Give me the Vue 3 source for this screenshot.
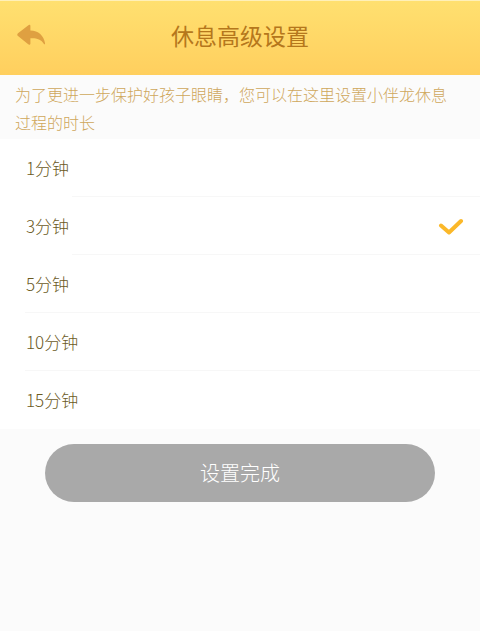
<template>
  <div class="rest-settings">
    <header class="rest-settings__header">
      <button class="rest-settings__back" type="button" aria-label="返回">
        <svg width="30" height="24" viewBox="0 0 30 24" aria-hidden="true">
          <path
            d="M12.4 2.2 C13.2 1.3 14.4 1.5 14.4 2.9 V7.4 C22.5 7.6 27.8 12.6 29 20 C29.2 21.6 28.3 21.6 27.6 20.4 C25 16.2 20.4 14.8 14.4 15.2 V20.4 C14.4 21.8 13.2 22.1 12.2 21.3 L2 13 C1 12.2 1 11 2 10.2 Z"
            fill="#dfa041"
          />
        </svg>
      </button>
      <h1 class="rest-settings__title">休息高级设置</h1>
    </header>

    <p class="rest-settings__desc">
      为了更进一步保护好孩子眼睛，您可以在这里设置小伴龙休息过程的时长
    </p>

    <form @submit.prevent="handleSubmit">
      <div class="rest-settings__list" role="radiogroup" aria-label="休息时长">
        <label
          v-for="item in options"
          :key="item.value"
          class="rest-settings__item"
          :class="{ 'rest-settings__item--indent': item.indent }"
        >
          <input
            v-model="selected"
            class="rest-settings__radio"
            type="radio"
            name="duration"
            :value="item.value"
          />
          <span class="rest-settings__label">{{ item.value }}分钟</span>
          <svg
            v-if="selected === item.value"
            class="rest-settings__check"
            width="26"
            height="18"
            viewBox="0 0 26 18"
            aria-hidden="true"
          >
            <path
              d="M3 8.5 L11 15.5 L23 4"
              fill="none"
              stroke="#fbb829"
              stroke-width="4"
              stroke-linecap="round"
              stroke-linejoin="round"
            />
          </svg>
        </label>
      </div>

      <div class="rest-settings__footer">
        <button class="rest-settings__submit" type="submit">设置完成</button>
      </div>
    </form>
  </div>
</template>

<script setup>
import { ref } from 'vue'

const emit = defineEmits(['confirm'])

const options = [
  { value: 1, indent: true },
  { value: 3, indent: true },
  { value: 5, indent: false },
  { value: 10, indent: false },
  { value: 15, indent: false },
]

const selected = ref(3)

const handleSubmit = () => {
  emit('confirm', selected.value)
}
</script>

<style>
body {
  margin: 0;
  background: #fbfbfb;
}
</style>

<style scoped>
.rest-settings {
  font-family: 'Noto Sans CJK SC', 'Noto Sans', sans-serif;
  font-weight: 300;
}

.rest-settings__header {
  display: grid;
  grid-template-columns: 64px 1fr 64px;
  align-items: center;
  box-sizing: border-box;
  height: 75px;
  border-top: 1px solid #fff0b8;
  background: linear-gradient(to bottom, #ffe070, #ffcf5e);
}

.rest-settings__back {
  display: flex;
  margin: 0;
  padding: 0 0 6px 16px;
  border: 0;
  background: none;
  cursor: pointer;
}

.rest-settings__title {
  margin: 0;
  padding-bottom: 6px;
  color: #b5771c;
  font-size: 23px;
  font-weight: 400;
  line-height: 32px;
  text-align: center;
}

.rest-settings__desc {
  margin: 0;
  padding: 5px 24px 3px 15px;
  color: #cfa75c;
  font-size: 16px;
  line-height: 28px;
}

.rest-settings__list {
  background: #fff;
}

.rest-settings__item {
  position: relative;
  display: flex;
  align-items: center;
  justify-content: space-between;
  box-sizing: border-box;
  height: 58px;
  padding: 0 16px 0 26px;
  cursor: pointer;
}

.rest-settings__item:not(:last-child)::after {
  content: '';
  position: absolute;
  right: 0;
  bottom: 0;
  left: 25px;
  height: 1px;
  background: #f7f7f7;
}

.rest-settings__item--indent:not(:last-child)::after {
  left: 72px;
}

.rest-settings__radio {
  position: absolute;
  width: 1px;
  height: 1px;
  margin: 0;
  opacity: 0;
}

.rest-settings__label {
  color: #6b5a1e;
  font-size: 17px;
  line-height: 28px;
}

.rest-settings__footer {
  padding: 15px 45px;
}

.rest-settings__submit {
  display: block;
  width: 100%;
  height: 58px;
  padding: 0;
  border: 0;
  border-radius: 29px;
  background: #a9a9a9;
  color: #fff;
  font-family: inherit;
  font-size: 20px;
  font-weight: inherit;
  line-height: 28px;
  cursor: pointer;
}
</style>
